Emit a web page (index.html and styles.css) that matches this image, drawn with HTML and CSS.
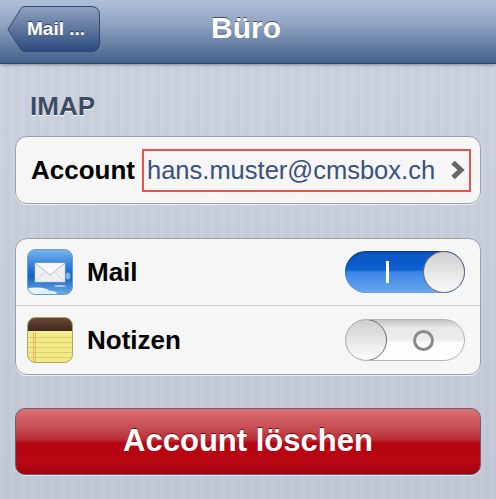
FILE: index.html
```html
<!DOCTYPE html>
<html lang="en">
<head>
    <meta charset="UTF-8">
    <meta name="viewport" content="width=device-width, initial-scale=1.0">
    <title>Büro</title>
    <link rel="stylesheet" href="styles.css">
</head>
<body>
    <div class="navbar">
        <div class="back-btn">
            <svg class="back-shape" width="94" height="47" viewBox="0 0 94 47">
                <defs>
                    <linearGradient id="backFill" x1="0" y1="0" x2="0" y2="1">
                        <stop offset="0" stop-color="#8fa2c0"/>
                        <stop offset="0.5" stop-color="#5f769e"/>
                        <stop offset="1" stop-color="#2a4a7e"/>
                    </linearGradient>
                </defs>
                <path d="M1 23.500 L14 2.500 Q15 0.500 18 0.500 H84 Q92.500 0.500 92.500 9 V37 Q92.500 45.500 84 45.500 H18 Q15 45.500 14 43.500 Z" fill="url(#backFill)" stroke="#33476a"/>
            </svg>
            <span class="back-label">Mail ...</span>
        </div>
        <div class="nav-title">Büro</div>
    </div>

    <div class="content">
        <div class="section-title">IMAP</div>

        <div class="card account-card">
            <span class="row-label">Account</span>
            <div class="account-value">
                <span class="account-mail">hans.muster@cmsbox.ch</span>
                <svg class="chevron" width="15" height="20" viewBox="0 0 15 20">
                    <path d="M3 2.500 L11 10 L3 17.500" fill="none" stroke="#666" stroke-width="5"/>
                </svg>
            </div>
        </div>

        <div class="card switch-card">
            <div class="switch-row">
                <svg class="app-icon" width="46" height="46" viewBox="0 0 46 46">
                    <defs>
                        <linearGradient id="mailBg" x1="0" y1="0" x2="0" y2="1">
                            <stop offset="0" stop-color="#7db8ee"/>
                            <stop offset="0.4" stop-color="#2a78d8"/>
                            <stop offset="0.6" stop-color="#1360c4"/>
                            <stop offset="1" stop-color="#6fb0e4"/>
                        </linearGradient>
                        <clipPath id="mailClip">
                            <rect x="0.500" y="0.500" width="45" height="45" rx="8"/>
                        </clipPath>
                    </defs>
                    <g clip-path="url(#mailClip)">
                        <rect width="46" height="46" fill="url(#mailBg)"/>
                        <ellipse cx="9" cy="42" rx="13" ry="3.500" fill="#e8f3fb"/>
                        <ellipse cx="20" cy="44" rx="10" ry="2.500" fill="#dcecf8"/>
                        <ellipse cx="33" cy="37" rx="6" ry="1" fill="#a9cdec"/>
                        <ellipse cx="41" cy="27" rx="2.500" ry="3.500" fill="#7fb2e0"/>
                    </g>
                    <rect x="0.500" y="0.500" width="45" height="45" rx="8" fill="none" stroke="#6d9cc4"/>
                    <rect x="8" y="14" width="30" height="19" fill="#eeeff1" stroke="#c3c8d0" stroke-width="0.500"/>
                    <path d="M8 14 L23 26 L38 14" fill="#f8f8f8" stroke="#b4bac4"/>
                    <path d="M8 33 L19 22 M38 33 L27 22" fill="none" stroke="#cfd3d9"/>
                </svg>
                <span class="row-label">Mail</span>
                <div class="switch switch-on">
                    <span class="mark-on"></span>
                    <span class="knob"></span>
                </div>
            </div>
            <div class="switch-row">
                <svg class="app-icon" width="46" height="46" viewBox="0 0 46 46">
                    <defs>
                        <linearGradient id="noteTop" x1="0" y1="0" x2="0" y2="1">
                            <stop offset="0" stop-color="#6d4a38"/>
                            <stop offset="1" stop-color="#41281d"/>
                        </linearGradient>
                        <clipPath id="noteClip">
                            <rect x="0.500" y="0.500" width="45" height="45" rx="8"/>
                        </clipPath>
                    </defs>
                    <g clip-path="url(#noteClip)">
                        <rect width="46" height="46" fill="#f3ea84"/>
                        <rect width="46" height="14" fill="url(#noteTop)"/>
                        <path d="M0 20.500H46M0 25.500H46M0 30.500H46M0 35.500H46M0 40.500H46" stroke="#d8cf70"/>
                        <path d="M6.500 14V46M8.500 14V46" stroke="#dcb76a"/>
                        <path d="M0 15H46" stroke="#fbf5b0" stroke-dasharray="3 1"/>
                    </g>
                    <rect x="0.500" y="0.500" width="45" height="45" rx="8" fill="none" stroke="#a9a46a"/>
                </svg>
                <span class="row-label">Notizen</span>
                <div class="switch switch-off">
                    <span class="knob"></span>
                    <span class="mark-off"></span>
                </div>
            </div>
        </div>

        <div class="delete-btn">Account löschen</div>
    </div>
</body>
</html>
```

FILE: styles.css
```css
* {
    margin: 0;
    padding: 0;
    box-sizing: border-box;
}
html, body {
    height: 100%;
}
body {
    font-family: "Liberation Sans", Arial, sans-serif;
    overflow: hidden;
    background-color: #c8cedb;
    background-image:
        repeating-linear-gradient(to right, rgba(255, 255, 255, 0.03) 0, rgba(255, 255, 255, 0.03) 5px, rgba(90, 100, 125, 0.02) 5px, rgba(90, 100, 125, 0.02) 10px),
        linear-gradient(to bottom, #cdd3df, #c1c7d5);
}
.navbar {
    height: 64px;
    padding: 6px 0 0 7px;
    border-bottom: 1px solid #2f4568;
    box-shadow: 0 1px 3px rgba(60, 70, 90, 0.5);
    background-image: linear-gradient(to bottom, #b0c0d8 0, #8fa2c0 40%, #41608c 100%);
    display: flex;
}
.back-btn {
    position: relative;
    width: 94px;
    height: 47px;
    color: #fff;
    font-size: 19px;
    font-weight: bold;
    text-shadow: 0 -1px 0 #2c3f60;
}
.back-shape {
    display: block;
}
.back-label {
    position: absolute;
    left: 20px;
    top: 12px;
    white-space: nowrap;
}
.nav-title {
    width: 190px;
    margin-left: 50px;
    margin-top: 6px;
    text-align: center;
    color: #fff;
    font-size: 30px;
    font-weight: bold;
    line-height: 32px;
    text-shadow: 0 -1px 0 #3c4f70;
}
.content {
    padding: 0 15px;
}
.section-title {
    margin: 27px 0 0 15px;
    height: 45px;
    color: #3c4a66;
    font-size: 26px;
    font-weight: bold;
    line-height: 30px;
    text-shadow: 0 1px 0 #fff;
}
.card {
    background-color: #f6f6f6;
    border: 1px solid #9c9fa6;
    border-radius: 12px;
    box-shadow: 0 1px 0 #eceef2;
}
.account-card {
    height: 68px;
    margin-bottom: 34px;
    padding-left: 15px;
    display: flex;
    align-items: center;
}
.row-label {
    color: #000;
    font-size: 26px;
    font-weight: bold;
}
.account-value {
    width: 329px;
    height: 43px;
    margin-left: 7px;
    padding-left: 3px;
    border: 2px solid #f0514c;
    display: flex;
    align-items: center;
}
.account-mail {
    color: #3a5085;
    font-size: 25.500px;
    white-space: nowrap;
}
.chevron {
    margin-left: 15px;
}
.switch-card {
    height: 137px;
}
.switch-row {
    height: 66px;
    padding: 0 15px 0 11px;
    display: flex;
    align-items: center;
}
.switch-row + .switch-row {
    height: 69px;
    border-top: 1px solid #cdcdcd;
}
.app-icon {
    margin-right: 14px;
    flex-shrink: 0;
}
.switch {
    position: relative;
    width: 120px;
    height: 42px;
    margin-left: auto;
    border-radius: 21px;
    display: flex;
    align-items: center;
    overflow: hidden;
}
.switch-on {
    justify-content: flex-end;
    background-image: linear-gradient(to bottom, #0b56c4 0, #0e5fd0 45%, #3a86e6 50%, #6aa8ee 100%);
    box-shadow: inset 0 1px 2px rgba(0, 20, 70, 0.5);
}
.switch-off {
    background-image: linear-gradient(to bottom, #c4c4c4 0, #e8e8e8 20%, #ececec 50%, #fbfbfb 55%, #fff 100%);
    border: 1px solid #b4b4b4;
}
.knob {
    width: 42px;
    height: 42px;
    border-radius: 50%;
    border: 1.500px solid #6e6e6e;
    background-image: linear-gradient(to bottom, #cfcfcf, #fcfcfc);
    flex-shrink: 0;
}
.switch-off .knob {
    margin-left: -1px;
}
.mark-on {
    width: 3px;
    height: 22px;
    margin-right: 34px;
    background-color: #fff;
}
.mark-off {
    width: 21px;
    height: 21px;
    margin-left: 26px;
    border-radius: 50%;
    border: 3px solid #8a8a8a;
}
.delete-btn {
    height: 67px;
    margin-top: 33px;
    border: 1px solid #5e6470;
    border-radius: 10px;
    background-image: linear-gradient(to bottom, #dc7074 0, #c44c52 30%, #b92a34 48%, #b50510 52%, #b80612 82%, #9c0410 100%);
    box-shadow: 0 1px 0 #e6e8ee;
    color: #fff;
    font-size: 31px;
    font-weight: bold;
    line-height: 64px;
    text-align: center;
    text-shadow: 0 -1px 0 #7a0a10;
}
```
